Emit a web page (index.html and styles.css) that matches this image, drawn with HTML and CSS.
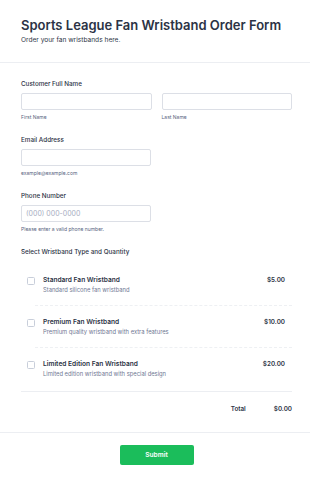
FILE: index.html
```html
<!DOCTYPE html>
<html lang="en">
<head>
<meta charset="utf-8">
<title>Sports League Fan Wristband Order Form</title>
<link rel="stylesheet" href="styles.css">
</head>
<body>
<div class="form">
  <header class="form-header">
    <h1 class="title">Sports League Fan Wristband Order Form</h1>
    <p class="subtitle">Order your fan wristbands here.</p>
  </header>

  <section class="form-body">
    <div class="field">
      <div class="label">Customer Full Name</div>
      <div class="name-row">
        <div class="name-col">
          <div class="input"></div>
          <div class="sublabel">First Name</div>
        </div>
        <div class="name-col">
          <div class="input"></div>
          <div class="sublabel">Last Name</div>
        </div>
      </div>
    </div>

    <div class="field">
      <div class="label">Email Address</div>
      <div class="input half"></div>
      <div class="sublabel">example@example.com</div>
    </div>

    <div class="field">
      <div class="label">Phone Number</div>
      <div class="input half"><span class="placeholder">(000) 000-0000</span></div>
      <div class="sublabel">Please enter a valid phone number.</div>
    </div>

    <div class="field">
      <div class="label">Select Wristband Type and Quantity</div>
      <div class="products">
        <div class="product">
          <span class="checkbox"></span>
          <div class="product-info">
            <div class="product-name">Standard Fan Wristband</div>
            <div class="product-desc">Standard silicone fan wristband</div>
          </div>
          <div class="price">$5.00</div>
        </div>
        <div class="sep"></div>
        <div class="product">
          <span class="checkbox"></span>
          <div class="product-info">
            <div class="product-name">Premium Fan Wristband</div>
            <div class="product-desc">Premium quality wristband with extra features</div>
          </div>
          <div class="price">$10.00</div>
        </div>
        <div class="sep"></div>
        <div class="product last">
          <span class="checkbox"></span>
          <div class="product-info">
            <div class="product-name">Limited Edition Fan Wristband</div>
            <div class="product-desc">Limited edition wristband with special design</div>
          </div>
          <div class="price">$20.00</div>
        </div>
      </div>
      <div class="total-row">
        <span class="total-label">Total</span>
        <span class="total-value">$0.00</span>
      </div>
    </div>
  </section>

  <footer class="form-footer">
    <button class="submit" type="button">Submit</button>
  </footer>
</div>
</body>
</html>
```

FILE: styles.css
```css
* { box-sizing: border-box; }

html, body {
  margin: 0;
  padding: 0;
  background: #ffffff;
}

body {
  font-family: Inter, "Noto Sans", sans-serif;
  color: #2c3345;
}

.form-header {
  padding: 17px 18px 18px 21px;
  border-bottom: 1px solid #eceef2;
}

.title {
  margin: 0;
  font-size: 13px;
  line-height: 16px;
  font-weight: 600;
  color: #2c3345;
}

.subtitle {
  margin: 3px 0 0;
  font-size: 6.6px;
  line-height: 8px;
  color: #2c3345;
}

.form-body {
  padding: 16px 18px 0 21px;
}

.field + .field {
  margin-top: 14px;
}

.label {
  font-size: 6.3px;
  line-height: 10px;
  font-weight: 500;
  color: #2c3345;
  margin-bottom: 4px;
}

.name-row {
  display: flex;
  gap: 10px;
}

.name-col {
  flex: 1;
}

.input {
  height: 17px;
  border: 1px solid #dcdfe6;
  border-radius: 2px;
  background: #fff;
  display: flex;
  align-items: center;
  padding-left: 4px;
}

.input.half {
  width: 130px;
}

.placeholder {
  font-size: 7px;
  color: #a8aebf;
}

.sublabel {
  margin-top: 4px;
  font-size: 5px;
  line-height: 7px;
  color: #57647e;
}

.products {
  margin-top: 7px;
  border-bottom: 1px solid #eceef2;
}

.product {
  display: flex;
  align-items: flex-start;
  padding: 12px 7px 11px 6px;
}

.product.last {
  padding-bottom: 13px;
}

.checkbox {
  width: 8px;
  height: 8px;
  margin-top: 0.5px;
  border: 1px solid #c8ceda;
  border-radius: 1.5px;
  flex: none;
  background: #fff;
}

.product-info {
  flex: 1;
  margin-left: 8px;
}

.product-name {
  font-size: 6.6px;
  line-height: 9px;
  font-weight: 600;
  color: #2c3345;
}

.product-desc {
  margin-top: 1px;
  font-size: 5.8px;
  line-height: 8px;
  color: #6f7893;
}

.price {
  font-size: 6.3px;
  line-height: 9px;
  font-weight: 600;
  color: #2c3345;
}

.sep {
  margin-left: 14px;
  border-top: 1px dashed #eef0f3;
}

.total-row {
  display: flex;
  justify-content: flex-end;
  gap: 28px;
  padding: 13px 0 18px;
  font-size: 6.3px;
  line-height: 9px;
  font-weight: 600;
  color: #2c3345;
}

.form-footer {
  border-top: 1px solid #eceef2;
  padding: 12px 18px 16px 21px;
  display: flex;
  justify-content: center;
}

.submit {
  width: 74px;
  height: 20px;
  border: none;
  border-radius: 2px;
  background: #1bbd5b;
  color: #ffffff;
  font-family: Inter, "Noto Sans", sans-serif;
  font-size: 6.6px;
  font-weight: 600;
  padding: 0;
}
```
